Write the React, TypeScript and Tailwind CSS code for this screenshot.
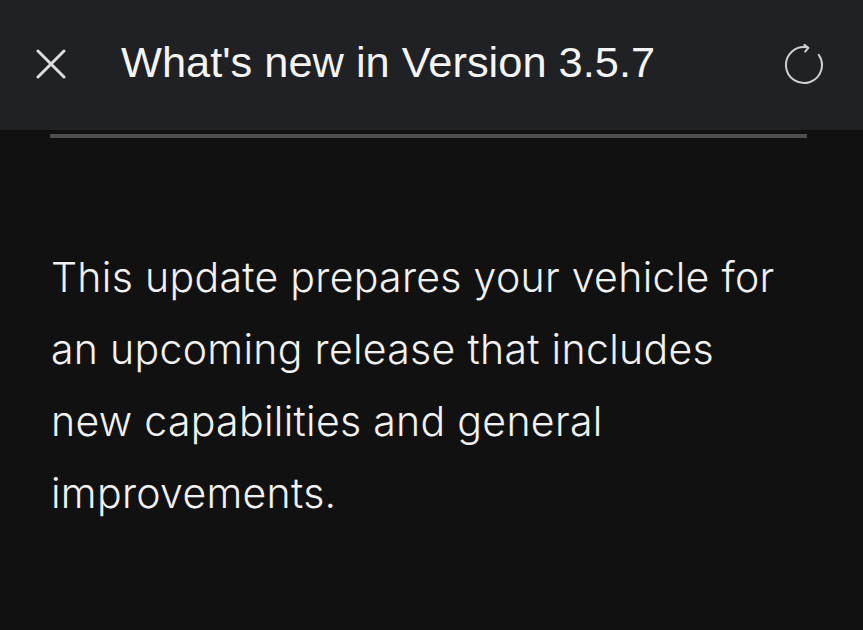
import React from 'react';

// Close "X" glyph used in the header
const CloseIcon: React.FC = () => (
  <svg width="30" height="30" viewBox="0 0 30 30" fill="none" stroke="#dcdcdc" strokeWidth="3" strokeLinecap="round">
    <path d="M2 2 L28 28 M28 2 L2 28" />
  </svg>
);

// Thin circular refresh arrow
const RefreshIcon: React.FC = () => (
  <svg width="42" height="42" viewBox="0 0 42 42" fill="none" stroke="#cfcfcf" strokeWidth="2" strokeLinecap="round" strokeLinejoin="round">
    <path d="M35.7 10.7 A18 18 0 1 1 24.1 3.3" />
    <path d="M21.4 0.9 L25.3 3.8 L22.2 7.6" />
  </svg>
);

const App: React.FC = () => {
  return (
    <div className="w-[863px] h-[630px] bg-[#111111] overflow-hidden flex flex-col">
      {/* Header */}
      <div className="h-[130px] bg-[#202124] flex items-center pl-[36px] pr-[38px] shrink-0">
        <div className="w-[30px] h-[30px] flex items-center justify-center mt-[-3px]">
          <CloseIcon />
        </div>
        <h1 className="ml-[55px] text-[43.4px] leading-none text-[#f4f4f4] font-['Liberation_Sans',Arial,sans-serif] mt-[-4px]">
          What's new in Version 3.5.7
        </h1>
        <div className="ml-auto w-[42px] h-[42px] flex items-center justify-center">
          <RefreshIcon />
        </div>
      </div>

      {/* Scroll indicator */}
      <div className="px-[50px] pt-[4px] shrink-0">
        <div className="h-[4px] w-[757px] bg-[#4e4e4e]" />
      </div>

      {/* Body */}
      <div className="px-[51px] pt-[103px]">
        <p className="text-[41px] leading-[72px] tracking-[0.3px] font-light text-[#f2f2f2] font-['Inter','Lato',sans-serif] [font-variant-ligatures:none]">
          This update prepares your vehicle for
          <br />
          an upcoming release that includes
          <br />
          new capabilities and general
          <br />
          improvements.
        </p>
      </div>
    </div>
  );
};

export default App;
